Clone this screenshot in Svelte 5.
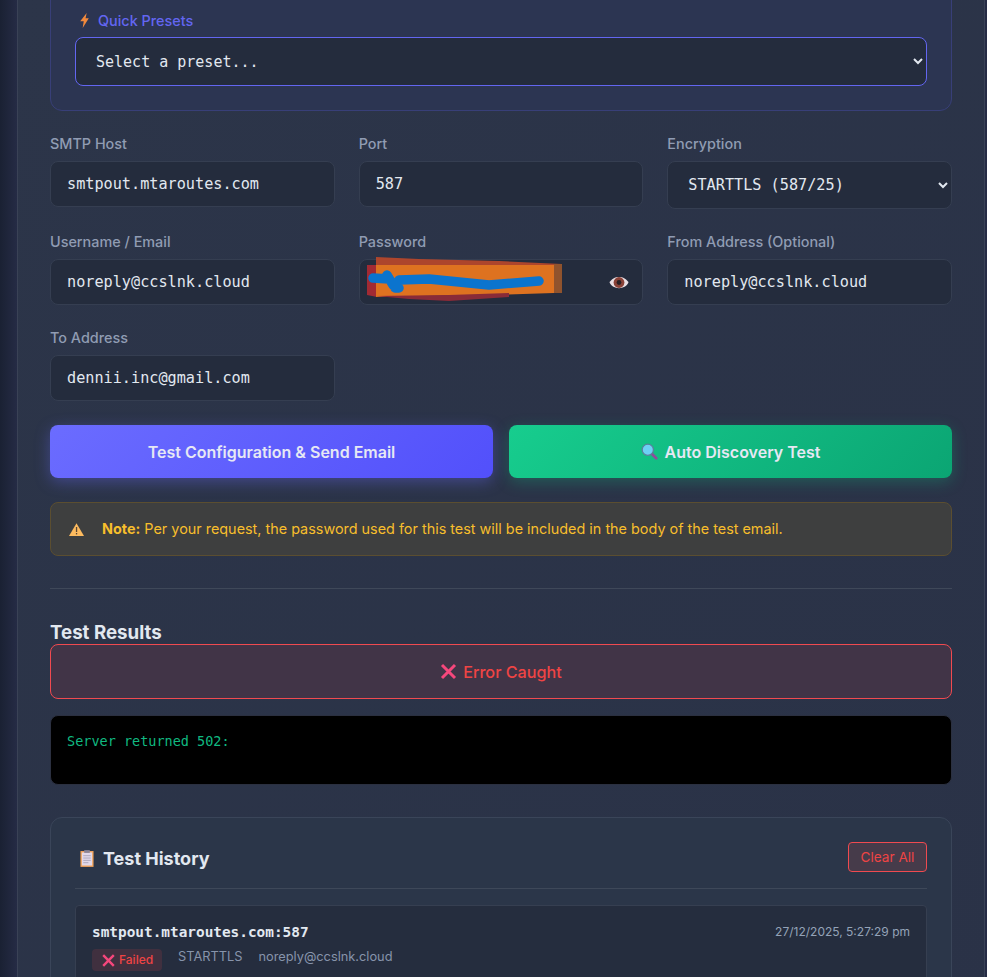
<script>
  let host = "smtpout.mtaroutes.com";
  let port = "587";
  let user = "noreply@ccslnk.cloud";
  let from = "noreply@ccslnk.cloud";
  let to = "dennii.inc@gmail.com";
</script>

<div class="page">
  <main class="card">
    <section class="presets">
      <div class="presetLabel">
        <svg width="9" height="15" viewBox="0 0 8 14"><path d="M6 0 L0 7.7 H3.3 L2.3 14 L8 5 H5 Z" fill="#f2893c" /></svg>
        <span>Quick Presets</span>
      </div>
      <select class="presetSelect">
        <option>Select a preset...</option>
      </select>
    </section>

    <div class="formGrid">
      <div class="field">
        <label for="host">SMTP Host</label>
        <input id="host" bind:value={host} />
      </div>
      <div class="field">
        <label for="port">Port</label>
        <input id="port" bind:value={port} />
      </div>
      <div class="field">
        <label for="enc">Encryption</label>
        <select id="enc" class="encSelect">
          <option>STARTTLS (587/25)</option>
        </select>
      </div>
      <div class="field">
        <label for="user">Username / Email</label>
        <input id="user" bind:value={user} />
      </div>
      <div class="field">
        <label for="pass">Password</label>
        <div class="passWrap">
          <input id="pass" />
          <!-- scribble the screenshot has over the password -->
          <svg class="scribble" width="210" height="50" viewBox="0 -2 210 50">
            <path d="M17 -2 L60 0 L140 2 L203 5 L203 12 L17 12 Z" fill="#b5472c" />
            <path d="M8 6 L18 6 L18 38 L8 36 Z" fill="#a92a33" />
            <path d="M17 6 L195 6 L195 34 L130 36 L60 37 L17 38 Z" fill="#e8761f" />
            <path d="M17 37 L90 36 L150 34 L150 38 L90 42 L50 40 Z" fill="#8f2b38" />
            <path d="M195 5 L203 5 L203 34 L195 34 Z" fill="#96562d" />
            <path d="M14 19 L30 20 M28 16 L34 26 M36 29 L40 29 M40 21 L70 20 L90 22 L130 26 L180 22" stroke="#0a78d6" stroke-width="9.5" stroke-linecap="round" stroke-linejoin="round" fill="none" />
          </svg>
          <svg class="eye" width="20" height="15" viewBox="0 0 20 15">
            <path d="M0.5 7.5 C4 0 16 0 19.5 7.5 C16 15 4 15 0.5 7.5 Z" fill="#e9dfe4" />
            <circle cx="10" cy="7.5" r="5.4" fill="#8a4238" />
            <circle cx="10" cy="7.5" r="2.4" fill="#2b2125" />
          </svg>
        </div>
      </div>
      <div class="field">
        <label for="from">From Address (Optional)</label>
        <input id="from" bind:value={from} />
      </div>
      <div class="field">
        <label for="to">To Address</label>
        <input id="to" bind:value={to} />
      </div>
    </div>

    <div class="actions">
      <button class="primary">Test Configuration &amp; Send Email</button>
      <button class="secondary">
        <svg width="17" height="17" viewBox="0 0 17 17">
          <path d="M10.5 10.5 L15.2 15.2" stroke="#8e4d9c" stroke-width="2.8" stroke-linecap="round" />
          <circle cx="6.8" cy="6.8" r="5.6" fill="#6cd1f5" stroke="#5a7f9c" stroke-width="1.2" />
        </svg>
        <span>Auto Discovery Test</span>
      </button>
    </div>

    <div class="note">
      <svg width="15" height="13" viewBox="0 0 15 13">
        <path d="M7.5 0.3 L15 13 H0 Z" fill="#fdbb5f" />
        <rect x="6.9" y="4" width="1.3" height="5" fill="#5a4632" />
        <rect x="6.9" y="10" width="1.3" height="1.4" fill="#5a4632" />
      </svg>
      <p><strong>Note:</strong> Per your request, the password used for this test will be included in the body of the test email.</p>
    </div>

    <hr />

    <h3 class="resultsTitle">Test Results</h3>
    <div class="errorBox">
      <svg width="17" height="17" viewBox="0 0 17 17"><path d="M2 2 L15 15 M15 2 L2 15" stroke="#f6477c" stroke-width="3" /></svg>
      <span>Error Caught</span>
    </div>
    <pre class="output">Server returned 502:</pre>

    <section class="history">
      <header class="historyHead">
        <h3>
          <svg width="14" height="17" viewBox="0 0 15 18">
            <rect x="0.5" y="1" width="14" height="17" fill="#f3a55e" />
            <rect x="2" y="2.5" width="11" height="14" fill="#e2d9ea" />
            <rect x="4.5" y="0" width="6" height="3" fill="#8a8496" />
            <path d="M3.5 6 H11.5 M3.5 8.5 H11.5 M3.5 11 H11.5 M3.5 13.5 H9" stroke="#a59fb5" stroke-width="0.9" />
          </svg>
          <span>Test History</span>
        </h3>
        <button class="clear">Clear All</button>
      </header>
      <article class="item">
        <div class="itemTop">
          <span class="itemHost">smtpout.mtaroutes.com:587</span>
          <span class="itemTime">27/12/2025, 5:27:29 pm</span>
        </div>
        <div class="itemMeta">
          <span class="badge">
            <svg width="13" height="13" viewBox="0 0 13 13"><path d="M1.2 1.2 L11.8 11.8 M11.8 1.2 L1.2 11.8" stroke="#f6477c" stroke-width="2.4" /></svg>
            Failed
          </span>
          <span>STARTTLS</span>
          <span>noreply@ccslnk.cloud</span>
        </div>
      </article>
    </section>
  </main>
</div>

<style>
  :global(body) {
    background: #1e2438;
    font-family: Inter, "Liberation Sans", sans-serif;
  }

  .page {
    height: 977px;
    overflow: hidden;
    padding: 0 2px 0 17px;
    box-sizing: border-box;
    background: linear-gradient(90deg, #1a2133 0, #252b45 17px, #252b45 100%);
  }

  .card {
    border-left: 1px solid #3a4256;
    border-right: 1px solid #3a4256;
    padding: 0 32px;
    background: linear-gradient(135deg, #2c3549 0%, #2a3247 100%);
    min-height: 1100px;
  }

  .presets {
    margin-top: -30px;
    padding: 30px 24px 24px;
    margin-bottom: 24.5px;
    height: 140.5px;
    box-sizing: border-box;
    background: #2c3552;
    border: 1px solid #383f78;
    border-radius: 12px;
  }

  .presetLabel {
    display: flex;
    align-items: center;
    gap: 9px;
    height: 30px;
    margin-top: 4px;
    padding-left: 5px;
    margin-bottom: 2px;
    font-size: 14.4px;
    font-weight: 500;
    color: #6366f1;
  }

  select, input {
    font-family: "DejaVu Sans Mono", "Liberation Mono", monospace;
    color: #e2e8f0;
    background: #242c3d;
    box-sizing: border-box;
    width: 100%;
    outline: none;
  }

  .presetSelect {
    display: block;
    height: 49px;
    padding: 0 16px;
    font-size: 15px;
    border: 1px solid #6366f1;
    border-radius: 8px;
  }

  .formGrid {
    display: grid;
    grid-template-columns: repeat(3, 1fr);
    gap: 24px;
    align-items: start;
  }

  .field label {
    display: block;
    font-size: 14.4px;
    line-height: 18px;
    margin-bottom: 7.8px;
    font-weight: 500;
    color: #909cb3;
  }

  input {
    height: 46.4px;
    padding: 1px 16px 0;
    font-size: 15.2px;
    border: 1px solid #353e51;
    border-radius: 8px;
  }

  .encSelect {
    display: block;
    height: 48px;
    padding: 1px 16px 0;
    font-size: 15.2px;
    border: 1px solid #353e51;
    border-radius: 8px;
  }

  .passWrap {
    position: relative;
  }

  .scribble {
    position: absolute;
    left: 0;
    top: -2px;
    opacity: 0.95;
  }

  .eye {
    position: absolute;
    right: 14px;
    top: 16.5px;
  }

  .actions {
    display: grid;
    grid-template-columns: 1fr 1fr;
    gap: 16px;
    margin-top: 24px;
  }

  .actions button {
    display: flex;
    align-items: center;
    justify-content: center;
    gap: 7px;
    height: 53px;
    border: none;
    border-radius: 8px;
    font-family: inherit;
    font-size: 16px;
    font-weight: 600;
    color: #e6e8f4;
  }

  .primary {
    background: linear-gradient(135deg, #6b6cff, #5250fb);
    box-shadow: 0 4px 15px rgba(99, 102, 241, 0.4);
  }

  .secondary {
    background: linear-gradient(135deg, #17cd8e, #0ba573);
    box-shadow: 0 4px 15px rgba(16, 185, 129, 0.3);
  }

  .note {
    display: flex;
    align-items: center;
    gap: 18px;
    height: 54px;
    box-sizing: border-box;
    margin-top: 24px;
    padding: 0 18px;
    background: #3e3f3f;
    border: 1px solid #5b4e30;
    border-radius: 8px;
    font-size: 14.4px;
    color: #f7be2c;
  }

  .note p {
    margin: 0 0 2px;
  }

  hr {
    border: none;
    border-top: 1px solid #3f4859;
    margin: 32px 0;
  }

  .resultsTitle {
    margin: 0;
    font-size: 18.7px;
    line-height: 23px;
    font-weight: 700;
    color: #e2e8f0;
  }

  .errorBox {
    display: flex;
    align-items: center;
    justify-content: center;
    gap: 6px;
    height: 55px;
    box-sizing: border-box;
    background: #413447;
    border: 1px solid #f04a50;
    border-radius: 8px;
    font-size: 16.2px;
    font-weight: 500;
    color: #ef4444;
  }

  .output {
    height: 70px;
    box-sizing: border-box;
    margin: 16px 0 32px;
    padding: 17px 16px;
    background: #000;
    border: 1px solid #2b3040;
    border-radius: 8px;
    font-family: "DejaVu Sans Mono", "Liberation Mono", monospace;
    font-size: 13.5px;
    line-height: 16px;
    color: #10b981;
  }

  .history {
    padding: 24px;
    background: #2b3649;
    border: 1px solid #3a4559;
    border-radius: 12px;
  }

  .historyHead {
    display: flex;
    align-items: center;
    justify-content: space-between;
    padding-bottom: 16px;
    margin-bottom: 16px;
    border-bottom: 1px solid #3e4859;
  }

  .historyHead h3 {
    display: flex;
    align-items: center;
    gap: 9px;
    margin: 0;
    padding: 2px 0 0 5px;
    font-size: 18px;
    font-weight: 700;
    color: #e2e8f0;
  }

  .clear {
    width: 79px;
    height: 30px;
    padding: 0;
    background: #463b4a;
    border: 1px solid #f04a50;
    border-radius: 4px;
    font-family: inherit;
    font-size: 13.6px;
    color: #ef4444;
  }

  .item {
    padding: 16px;
    background: #252d3e;
    border: 1px solid #363f51;
    border-radius: 4px;
  }

  .itemTop {
    display: flex;
    justify-content: space-between;
    align-items: center;
    margin-bottom: 7px;
    line-height: 20px;
  }

  .itemHost {
    font-family: "DejaVu Sans Mono", "Liberation Mono", monospace;
    font-size: 14.4px;
    font-weight: 700;
    color: #e2e8f0;
  }

  .itemTime {
    font-size: 12px;
    color: #94a3b8;
  }

  .itemMeta {
    display: flex;
    align-items: flex-start;
    gap: 16px;
    font-size: 12.8px;
    line-height: 16px;
    color: #8794ab;
  }

  .badge {
    display: inline-flex;
    align-items: center;
    gap: 4px;
    width: 70px;
    box-sizing: border-box;
    height: 22px;
    padding: 0 0 0 10px;
    background: #40303f;
    border-radius: 4px;
    font-size: 12px;
    font-weight: 500;
    color: #ef4444;
  }
</style>
